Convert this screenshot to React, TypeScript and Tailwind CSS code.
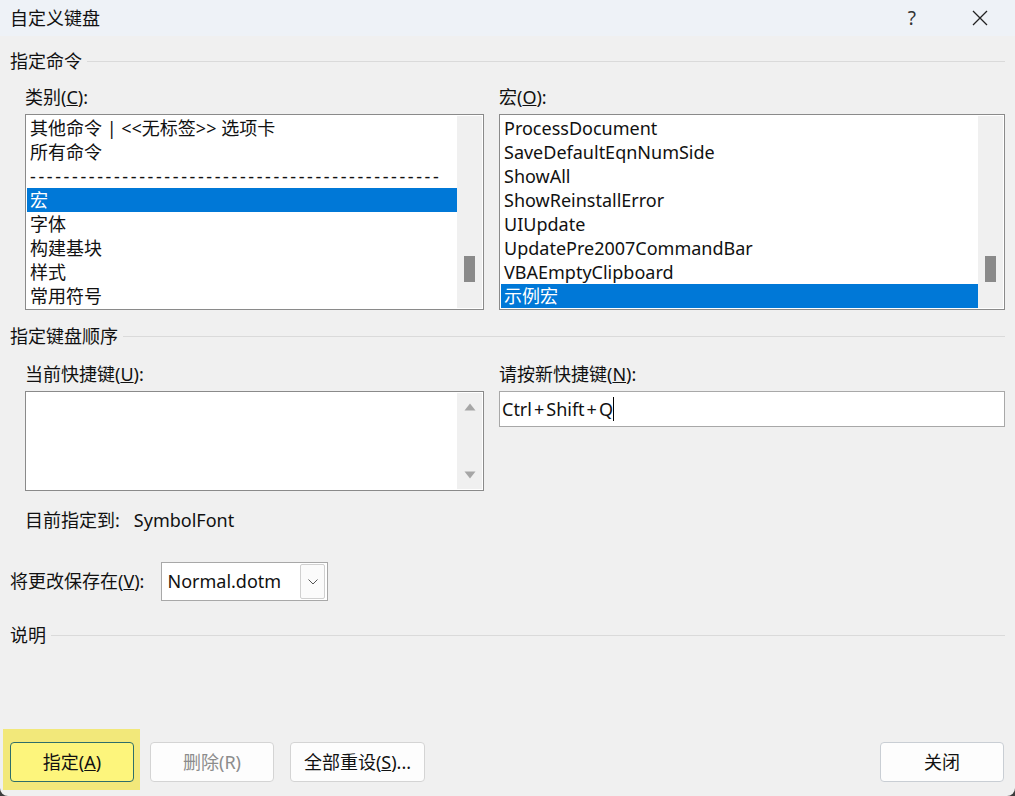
import React from "react";

const categories = [
	"其他命令 | <<无标签>> 选项卡",
	"所有命令",
	"DASH",
	"宏",
	"字体",
	"构建基块",
	"样式",
	"常用符号",
];

const macros = [
	"ProcessDocument",
	"SaveDefaultEqnNumSide",
	"ShowAll",
	"ShowReinstallError",
	"UIUpdate",
	"UpdatePre2007CommandBar",
	"VBAEmptyClipboard",
	"示例宏",
];

function SectionHead({ title }: { title: string }) {
	return (
		<div className="flex items-center h-[24px] pr-[10px]">
			<span>{title}</span>
			<div className="ml-[5px] h-px flex-1 bg-[#dadada]" />
		</div>
	);
}

function ListBox({ items, selected, width }: { items: string[]; selected: number; width: string }) {
	return (
		<div className={`${width} h-[196px] border border-[#8a8a8a] bg-white p-px flex`}>
			<div className="flex-1 flex flex-col">
				{items.map((item, i) => (
					<div
						key={i}
						className={
							"h-[24px] leading-[24px] pl-[3px] whitespace-nowrap " +
							(i === selected ? "bg-[#0078d7] text-white" : "")
						}
					>
						{item === "DASH" ? (
							<span className="tracking-[2.6px]">{"-".repeat(49)}</span>
						) : (
							item
						)}
					</div>
				))}
			</div>
			<div className="w-[25px] bg-[#f0f0f0] flex flex-col">
				<div className="h-[140px]" />
				<div className="ml-[7px] w-[11px] h-[26px] bg-[#8a8a8a]" />
			</div>
		</div>
	);
}

function Triangle({ up }: { up: boolean }) {
	return (
		<svg width="12" height="8" viewBox="0 0 12 8">
			<polygon points={up ? "6,0.5 11.5,7.5 0.5,7.5" : "0.5,0.5 11.5,0.5 6,7.5"} fill="#a6a6a6" />
		</svg>
	);
}

export default function App() {
	return (
		<div className="w-[1015px] h-[796px] bg-[#3c3c3c] overflow-hidden">
			<div className="w-[1015px] h-[796px] bg-[#f0f0f0] rounded-b-[8px] overflow-hidden text-[18px] text-[#111] font-['Noto_Sans','Noto_Sans_CJK_SC',sans-serif] flex flex-col">
				{/* title bar */}
				<div className="h-[36px] bg-[#eef2f7] flex items-center pl-[10px] shrink-0">
					<span className="leading-none">自定义键盘</span>
					<span className="ml-auto mr-[56px] text-[#333] text-[19px] leading-none">?</span>
					<svg width="16" height="16" viewBox="0 0 16 16" className="mr-[27px]">
						<path d="M1 1 L15 15 M15 1 L1 15" stroke="#222" strokeWidth="1.3" />
					</svg>
				</div>

				<div className="pl-[10px] flex flex-col">
					<div className="mt-[13px]">
						<SectionHead title="指定命令" />
					</div>
					<div className="flex mt-[12px] pl-[15px]">
						<div className="flex flex-col w-[459px]">
							<div className="h-[24px] leading-[24px]">
								类别(<u>C</u>):
							</div>
							<div className="mt-[5px]">
								<ListBox items={categories} selected={3} width="w-[459px]" />
							</div>
						</div>
						<div className="flex flex-col ml-[15px] w-[506px]">
							<div className="h-[24px] leading-[24px]">
								宏(<u>O</u>):
							</div>
							<div className="mt-[5px]">
								<ListBox items={macros} selected={7} width="w-[506px]" />
							</div>
						</div>
					</div>

					<div className="mt-[14px]">
						<SectionHead title="指定键盘顺序" />
					</div>
					<div className="flex mt-[14px] pl-[15px]">
						<div className="flex flex-col w-[459px]">
							<div className="h-[24px] leading-[24px]">
								当前快捷键(<u>U</u>):
							</div>
							<div className="mt-[5px] h-[100px] border border-[#8a8a8a] bg-white flex justify-end p-px">
								<div className="w-[25px] bg-[#f0f0f0] flex flex-col items-center justify-between py-[10px]">
									<Triangle up />
									<Triangle up={false} />
								</div>
							</div>
							<div className="mt-[17px] h-[24px] leading-[24px]">
								目前指定到:<span className="ml-[14px]">SymbolFont</span>
							</div>
						</div>
						<div className="flex flex-col ml-[15px] w-[506px]">
							<div className="h-[24px] leading-[24px]">
								请按新快捷键(<u>N</u>):
							</div>
							<div className="mt-[5px] h-[36px] border border-[#a8a8a8] bg-white flex items-center pl-[2px]">
								<span>
									Ctrl<span className="mx-[2px]">+</span>Shift<span className="mx-[2px]">+</span>Q
								</span>
								<span className="w-px h-[24px] bg-black" />
							</div>
						</div>
					</div>

					<div className="flex items-center mt-[30px] h-[39px]">
						<span>
							将更改保存在(<u>V</u>):
						</span>
						<div className="ml-[17px] w-[167px] h-[39px] border border-[#a8a8a8] bg-white flex items-center pl-[5px] pr-[2px]">
							<span>Normal.dotm</span>
							<div className="ml-auto w-[25px] h-[35px] border border-[#d0d0d0] bg-[#fbfbfb] rounded-[2px] flex items-center justify-center">
								<svg width="10" height="6" viewBox="0 0 10 6">
									<path d="M0.5 0.5 L5 5 L9.5 0.5" stroke="#555" fill="none" strokeWidth="1" />
								</svg>
							</div>
						</div>
					</div>

					<div className="mt-[22px]">
						<SectionHead title="说明" />
					</div>
				</div>

				{/* buttons */}
				<div className="mt-auto mb-[6px] flex items-start pl-[3px] pr-[11px]">
					<div className="w-[137px] h-[61px] bg-[#f2e87a] pt-[13px] pl-[7px]">
						<button className="w-[124px] h-[40px] rounded-[4px] border border-[#2e6e6a] bg-[#fdf57c] text-[18px]">
							指定(<u>A</u>)
						</button>
					</div>
					<button className="ml-[10px] mt-[13px] w-[124px] h-[40px] rounded-[4px] border border-[#d4d4d4] bg-[#fdfdfd] text-[#8c8c8c] text-[18px]">
						删除(R)
					</button>
					<button className="ml-[16px] mt-[13px] w-[135px] h-[40px] rounded-[4px] border border-[#d4d4d4] bg-[#fdfdfd] text-[18px]">
						全部重设(<u>S</u>)...
					</button>
					<button className="ml-auto mt-[13px] w-[124px] h-[40px] rounded-[4px] border border-[#c9ced4] bg-[#fdfdfd] text-[18px]">
						关闭
					</button>
				</div>
			</div>
		</div>
	);
}
